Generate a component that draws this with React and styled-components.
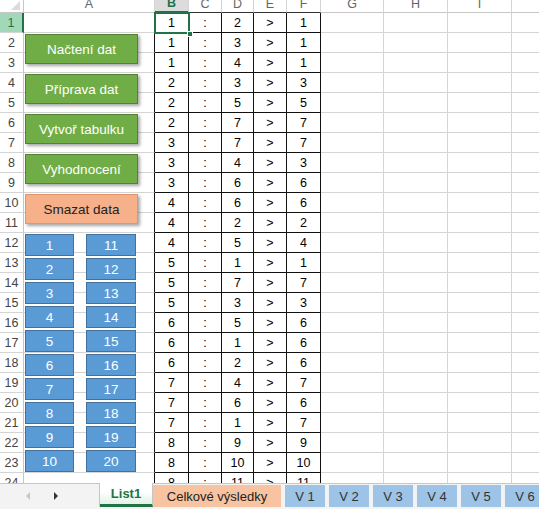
// Imports
import React from "react";
import styled, { createGlobalStyle } from "styled-components";

// Data
const COLS = ["A", "B", "C", "D", "E", "F", "G", "H", "I", "J"];
const PAIRS = [
	[1, 2, 1], [1, 3, 1], [1, 4, 1], [2, 3, 3], [2, 5, 5], [2, 7, 7],
	[3, 7, 7], [3, 4, 3], [3, 6, 6], [4, 6, 6], [4, 2, 2], [4, 5, 4],
	[5, 1, 1], [5, 7, 7], [5, 3, 3], [6, 5, 6], [6, 1, 6], [6, 2, 6],
	[7, 4, 7], [7, 6, 6], [7, 1, 7], [8, 9, 9], [8, 10, 10], [8, 11, 11],
];
const ACTIONS = [
	{ label: "Načtení dat", kind: "green" },
	{ label: "Příprava dat", kind: "green" },
	{ label: "Vytvoř tabulku", kind: "green" },
	{ label: "Vyhodnocení", kind: "green" },
	{ label: "Smazat data", kind: "orange" },
];
const GRID = "24px 131px 34px 33px 32px 33px 34px 63px 64px 64px 1fr";

// Component
const App = () => {

	// Rows of the table
	const rows = [];
	for (let r = 0; r < 25; r++){
		const p = PAIRS[r];
		const values = p ? [p[0], ":", p[1], ">", p[2]] : ["", "", "", "", ""];
		rows.push(
			<React.Fragment key={ r }>
				<RowHead $active={ r === 0 }>{ r + 1 }</RowHead>
				<Cell $edge={ r < 24 }></Cell>
				{ values.map((v, i) => (
					<Cell key={ i } $table={ r < 24 }>{ v }</Cell>
				)) }
				<Cell></Cell><Cell></Cell><Cell></Cell><Cell></Cell>
			</React.Fragment>
		);
	}

	// Return
	return(
		<Page>
			<GlobalStyle/>

			{/* Sheet */}
			<Sheet>
				<Grid>
					<Corner/>
					{ COLS.map((c, i) => (
						<ColHead key={ c } $active={ c === "B" } $dark={ i >= 2 && i <= 5 }>{ c }</ColHead>
					)) }
					{ rows }
				</Grid>

				{/* Selected cell */}
				<Selection><Handle/></Selection>

				{/* Shapes */}
				<Shapes>
					{ ACTIONS.map((a) => (
						<ActionBtn key={ a.label } $kind={ a.kind }>{ a.label }</ActionBtn>
					)) }
					<NumberGrid>
						{ Array.from({ length: 10 }).map((_, i) => (
							<React.Fragment key={ i }>
								<NumBtn>{ i + 1 }</NumBtn>
								<NumBtn>{ i + 11 }</NumBtn>
							</React.Fragment>
						)) }
					</NumberGrid>
				</Shapes>
			</Sheet>
			{/* Sheet */}

			{/* Tabs */}
			<TabBar>
				<Arrows>
					<Arrow $dir="left"/>
					<Arrow $dir="right"/>
				</Arrows>
				<Tab $kind="active">List1</Tab>
				<Tab $kind="orange">Celkové výsledky</Tab>
				{ [1, 2, 3, 4, 5, 6].map((n) => (
					<Tab key={ n } $kind="blue">V { n }</Tab>
				)) }
			</TabBar>
			{/* Tabs */}

		</Page>
	);

};

// Styled
const GlobalStyle = createGlobalStyle`
	html, body{
		margin: 0;
		padding: 0;
		background: #ffffff;
	}
	*{
		box-sizing: border-box;
	}
`;

const Page = styled.div`
	width: 539px;
	height: 509px;
	overflow: hidden;
	display: flex;
	flex-direction: column;
	font-family: "Liberation Sans", Arial, sans-serif;
	color: #000;
`;

const Sheet = styled.div`
	position: relative;
	height: 483px;
	overflow: hidden;
	flex: none;
`;

const Grid = styled.div`
	display: grid;
	grid-template-columns: ${ GRID };
	grid-template-rows: 13px;
	grid-auto-rows: 20px;
	width: 600px;
`;

const Corner = styled.div`
	position: relative;
	background: #ffffff;
	border-right: 1px solid #c6c6c6;
	border-bottom: 1px solid #c6c6c6;
	&::after{
		content: "";
		position: absolute;
		right: 3px;
		bottom: 2px;
		border-left: 9px solid transparent;
		border-bottom: 9px solid #dadada;
	}
`;

const ColHead = styled.div`
	display: flex;
	align-items: flex-end;
	justify-content: center;
	overflow: hidden;
	font-size: 12.5px;
	line-height: 12px;
	padding-bottom: 2px;
	color: ${ (p) => p.$active ? "#217346" : "#666" };
	font-weight: ${ (p) => p.$active ? "bold" : "normal" };
	background: ${ (p) => p.$active ? "#dcdcdc" : "#ffffff" };
	border-right: 1px solid #d4d4d4;
	border-bottom: ${ (p) => p.$active ? "2px solid #217346" : p.$dark ? "1px solid #333" : "1px solid #c6c6c6" };
`;

const RowHead = styled.div`
	display: flex;
	align-items: center;
	justify-content: center;
	font-size: 12.5px;
	color: ${ (p) => p.$active ? "#217346" : "#444" };
	background: ${ (p) => p.$active ? "#a2d8ba" : "#ffffff" };
	border-right: ${ (p) => p.$active ? "2px solid #217346" : "1px solid #c6c6c6" };
	border-bottom: 1px solid #d4d4d4;
`;

const Cell = styled.div`
	display: flex;
	align-items: center;
	justify-content: center;
	font-size: 12.5px;
	border-right: 1px solid ${ (p) => (p.$table || p.$edge) ? "#111" : "#d4d4d4" };
	border-bottom: 1px solid ${ (p) => p.$table ? "#111" : "#d4d4d4" };
`;

const Selection = styled.div`
	position: absolute;
	left: 154px;
	top: 12px;
	width: 36px;
	height: 22px;
	border: 2px solid #217346;
	pointer-events: none;
`;

const Handle = styled.div`
	position: absolute;
	right: -5px;
	bottom: -5px;
	width: 6px;
	height: 6px;
	background: #217346;
	border: 1px solid #ffffff;
`;

const Shapes = styled.div`
	position: absolute;
	left: 25px;
	top: 34px;
	width: 113px;
	display: flex;
	flex-direction: column;
	gap: 10px;
`;

const ActionBtn = styled.div`
	height: 30px;
	display: flex;
	align-items: center;
	justify-content: center;
	font-size: 13.5px;
	color: ${ (p) => p.$kind === "orange" ? "#222" : "#ffffff" };
	background: ${ (p) => p.$kind === "orange" ? "#f6b08a" : "#70ad47" };
	border: 1px solid ${ (p) => p.$kind === "orange" ? "#e0956c" : "#548235" };
	box-shadow: 2px 2px 3px rgba(0, 0, 0, 0.35);
`;

const NumberGrid = styled.div`
	display: grid;
	grid-template-columns: 49px 50px;
	grid-auto-rows: 22px;
	column-gap: 12px;
	row-gap: 2px;
`;

const NumBtn = styled.div`
	display: flex;
	align-items: center;
	justify-content: center;
	font-size: 13.5px;
	color: #ffffff;
	background: #5b9bd5;
	border: 1px solid #41719c;
`;

const TabBar = styled.div`
	flex: 1;
	display: flex;
	align-items: stretch;
	background: #f3f3f3;
	border-top: 1px solid #c6c6c6;
	padding-bottom: 2px;
	white-space: nowrap;
`;

const Arrows = styled.div`
	width: 100px;
	display: flex;
	align-items: center;
	gap: 24px;
	padding-left: 26px;
	border-right: 1px solid #c6c6c6;
	flex: none;
`;

const Arrow = styled.span`
	width: 0;
	height: 0;
	border-top: 4px solid transparent;
	border-bottom: 4px solid transparent;
	${ (p) => p.$dir === "left"
		? "border-right: 4px solid #c8c8c8;"
		: "border-left: 4px solid #333;" }
`;

const Tab = styled.div`
	flex: none;
	display: flex;
	align-items: center;
	justify-content: center;
	font-size: 13px;
	${ (p) => p.$kind === "active" ? `
		width: 53px;
		margin-top: -1px;
		color: #217346;
		font-weight: bold;
		background: linear-gradient(#ffffff 40%, #e3f1e8);
		border-right: 1px solid #c6c6c6;
		border-bottom: 3px solid #217346;
	` : p.$kind === "orange" ? `
		width: 128px;
		margin: 1px 0 0 0;
		color: #222;
		background: #f7c3a0;
	` : `
		width: 40px;
		margin: 1px 0 0 4px;
		color: #333;
		background: #9dc3e6;
	` }
`;

// Export
export default App;
